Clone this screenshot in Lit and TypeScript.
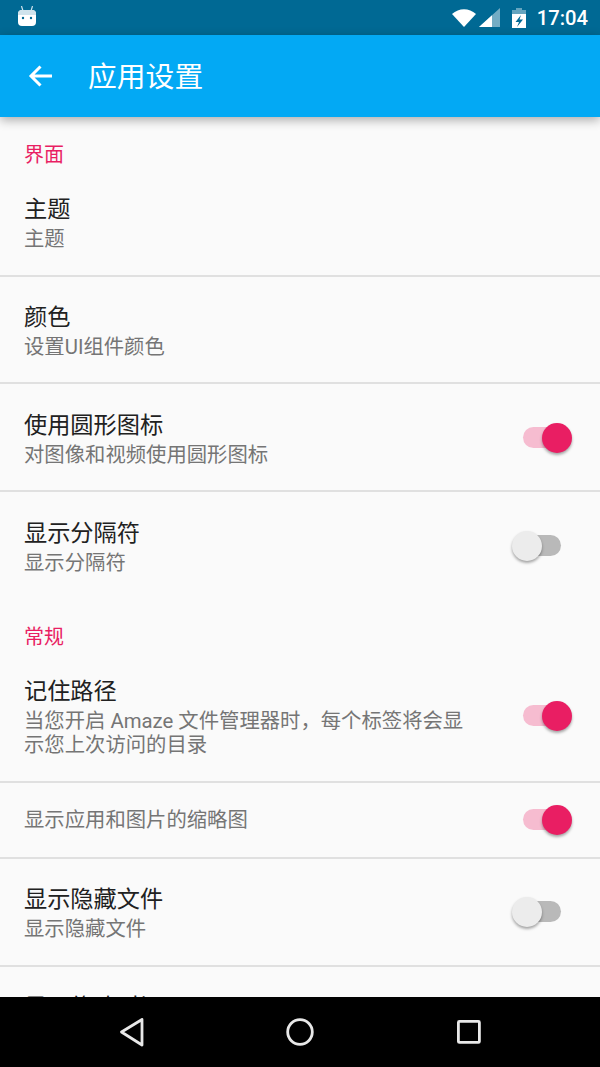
import { LitElement, html, css } from 'lit';
import { customElement } from 'lit/decorators.js';

type Row = { title?: string; sub: string; toggle?: boolean; h: number };

const UI_ROWS: Row[] = [
  { title: '主题', sub: '主题', h: 107.67 },
  { title: '颜色', sub: '设置UI组件颜色', h: 107.67 },
  { title: '使用圆形图标', sub: '对图像和视频使用圆形图标', toggle: true, h: 107.67 },
  { title: '显示分隔符', sub: '显示分隔符', toggle: false, h: 107.67 },
];

const GENERAL_ROWS: Row[] = [
  { title: '记住路径', sub: '当您开启 Amaze 文件管理器时，每个标签将会显示您上次访问的目录', toggle: true, h: 132 },
  { sub: '显示应用和图片的缩略图', toggle: true, h: 76 },
  { title: '显示隐藏文件', sub: '显示隐藏文件', toggle: false, h: 107.67 },
  { title: '显示修改时间', sub: '显示修改时间', h: 107.67 },
];

@customElement('app-root')
export class AppRoot extends LitElement {
  static styles = css`
    :host {
      display: block;
      width: 600px;
      height: 1067px;
      font-family: Roboto, 'Noto Sans CJK SC', sans-serif;
      background: #fafafa;
    }
    .screen {
      height: 1067px;
      display: flex;
      flex-direction: column;
      overflow: hidden;
    }
    .status {
      flex: 0 0 35px;
      background: #006994;
      display: flex;
      align-items: center;
      padding: 0 12px 0 18px;
      color: #fff;
    }
    .status .spacer { flex: 1; }
    .bot { margin-top: -4px; }
    .wifi { margin-right: 3px; }
    .battery { margin: 0 11px 0 12px; }
    .time { font-size: 20.2px; font-weight: 500; }
    .toolbar {
      flex: 0 0 82px;
      background: #03a9f4;
      display: flex;
      align-items: center;
      padding-left: 28px;
      gap: 35px;
      color: #fff;
      font-size: 28.8px;
      box-shadow: 0 3px 10px rgba(0, 0, 0, 0.32);
      position: relative;
      z-index: 1;
    }
    .toolbar span { margin-bottom: 3px; }
    .list { flex: 1; min-height: 0; overflow: hidden; }
    .section {
      height: 52px;
      box-sizing: border-box;
      padding: 26px 24px 0;
      font-size: 20px;
      line-height: 24px;
      color: #e91e63;
    }
    .section.second { height: 51.33px; padding-top: 25px; }
    .row {
      box-sizing: border-box;
      display: flex;
      align-items: center;
      padding: 0 39px 0 24px;
      border-bottom: 2px solid #e0e0e0;
    }
    .row.last { border-bottom: none; }
    .text { flex: 1; min-width: 0; padding: 1px 50px 0 0; }
    .title { font-size: 23.2px; line-height: 32px; margin-bottom: 2px; color: #212121; }
    .sub { font-size: 20.35px; line-height: 24px; color: #757575; }
    .switch {
      position: relative;
      width: 38px;
      height: 21px;
      border-radius: 11px;
      flex: none;
    }
    .switch::after {
      content: '';
      position: absolute;
      top: -4px;
      width: 30px;
      height: 30px;
      border-radius: 50%;
      box-shadow: 0 2px 3px rgba(0, 0, 0, 0.35);
    }
    .switch.on { background: #f6bcd0; }
    .switch.on::after { right: -11px; background: #e91e63; }
    .switch.off { background: #b9b9b9; }
    .switch.off::after { left: -11px; background: #ececec; }
    .nav {
      flex: 0 0 70px;
      background: #000;
      display: flex;
      align-items: center;
      justify-content: space-between;
      padding: 0 116px;
    }
    svg { display: block; }
  `;

  private renderRow(row: Row, last = false) {
    return html`
      <div class="row ${last ? 'last' : ''}" style="height:${row.h}px">
        <div class="text">
          ${row.title ? html`<div class="title">${row.title}</div>` : ''}
          <div class="sub">${row.sub}</div>
        </div>
        ${row.toggle === undefined
          ? ''
          : html`<div class="switch ${row.toggle ? 'on' : 'off'}"></div>`}
      </div>
    `;
  }

  render() {
    return html`
      <div class="screen">
        <div class="status">
          <svg class="bot" width="18" height="20" viewBox="0 0 18 20">
            <path d="M3.500 0l1.500 5M14.500 0l-1.500 5" stroke="#cfe3ec" stroke-width="1.2" />
            <path d="M0 8a4 4 0 0 1 4-4h10a4 4 0 0 1 4 4v8a4 4 0 0 1-4 4H4a4 4 0 0 1-4-4z" fill="#fff" />
            <path d="M0 8a4 4 0 0 1 4-4h10a4 4 0 0 1 4 4v1H0z" fill="#cfe3ec" />
            <circle cx="5" cy="12" r="1.200" fill="#006994" />
            <circle cx="13" cy="12" r="1.200" fill="#006994" />
          </svg>
          <div class="spacer"></div>
          <svg class="wifi" width="24" height="18" viewBox="0 0 24 18">
            <path d="M0 5C7-1.500 17-1.500 24 5L12 18z" fill="#fff" />
          </svg>
          <svg width="21" height="19" viewBox="0 0 21 19">
            <path d="M21 0v19H0z" fill="#fff" fill-opacity=".45" />
            <path d="M13 7.200V19H0z" fill="#fff" />
          </svg>
          <svg class="battery" width="14" height="20" viewBox="0 0 14 20">
            <path d="M4 0h6v2h4v18H0V2h4z" fill="#fff" fill-opacity=".4" />
            <path d="M0 6h14v14H0z" fill="#fff" />
            <path d="M9 7L3.500 14H7l-2 5 6-7.500H7.500z" fill="#006994" />
          </svg>
          <span class="time">17:04</span>
        </div>
        <div class="toolbar">
          <svg width="25" height="24" viewBox="0 0 25 24">
            <path d="M24 12H3M12.500 2.500L3 12l9.500 9.500" fill="none" stroke="#fff" stroke-width="3" />
          </svg>
          <span>应用设置</span>
        </div>
        <div class="list">
          <div class="section">界面</div>
          ${UI_ROWS.map((r, i) => this.renderRow(r, i === UI_ROWS.length - 1))}
          <div class="section second">常规</div>
          ${GENERAL_ROWS.map((r) => this.renderRow(r))}
        </div>
        <div class="nav">
          <svg width="32" height="32" viewBox="0 0 32 32">
            <path d="M26 3.500L5.500 16 26 29z" fill="none" stroke="#e8e8e8" stroke-width="2.800" stroke-linejoin="round" />
          </svg>
          <svg width="32" height="32" viewBox="0 0 32 32">
            <circle cx="16" cy="16" r="12.300" fill="none" stroke="#e8e8e8" stroke-width="2.800" />
          </svg>
          <svg width="32" height="32" viewBox="0 0 32 32">
            <rect x="6.400" y="5.400" width="21" height="21" rx="1" fill="none" stroke="#e8e8e8" stroke-width="2.800" />
          </svg>
        </div>
      </div>
    `;
  }
}
